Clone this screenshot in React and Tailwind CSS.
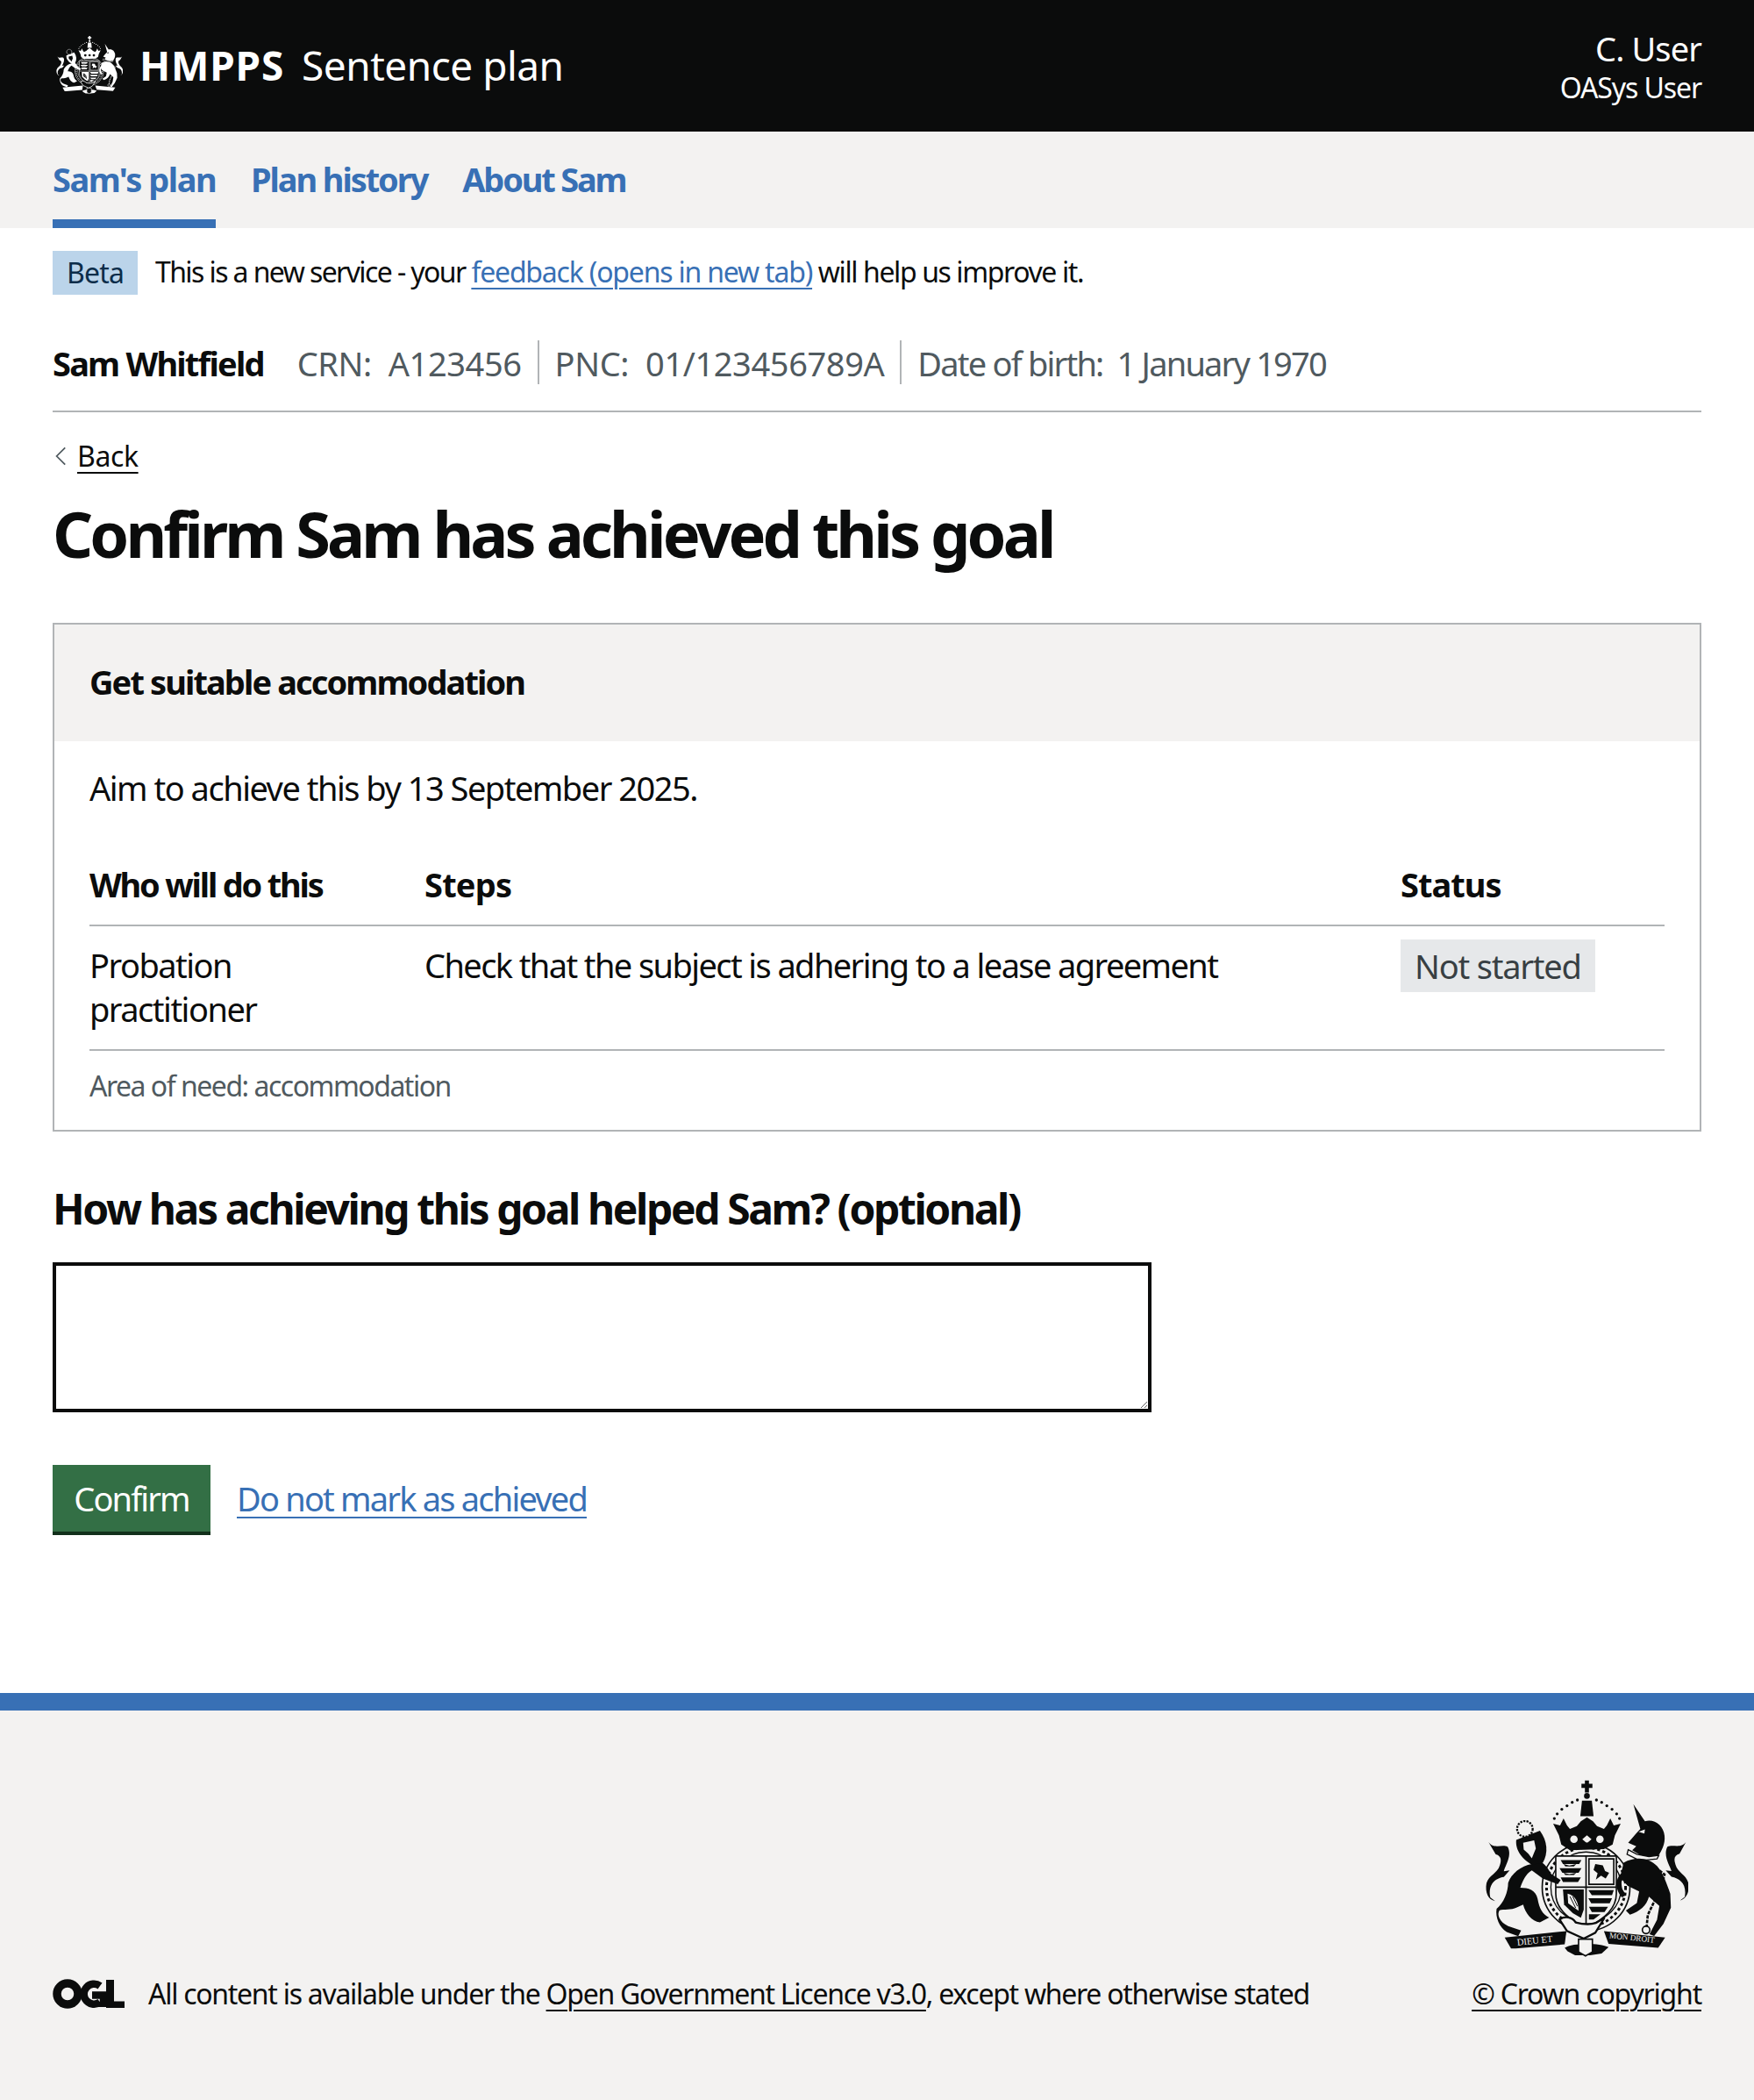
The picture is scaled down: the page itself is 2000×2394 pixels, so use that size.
const Crest = ({ className, cut, legend }) => (
  <svg viewBox="100 55 703 620" className={className} fill="currentColor" aria-hidden="true">
    {/* orb and cross */}
    <path d="M446 60h14v12h12v14h-12v16h-14V86h-12V72h12z" />
    <circle cx="453" cy="114" r="10" />
    <path d="M436 130h34l6 54h-46z" />
    {[[340, 192], [350, 176], [366, 160], [384, 148], [402, 136], [420, 128], [486, 128], [504, 136], [522, 148], [540, 160], [556, 176], [566, 192]].map(([x, y]) => (
      <circle key={x} cx={x} cy={y} r="5" />
    ))}
    {/* crown */}
    <path d="M336 210l24 6 12-24 12 24 10 12 24-10 14-16 21-14 21 14 14 16 24 10 10-12 12-24 12 24 24-6-20 40-8 32-30 16-118 4-30-20-8-32z" />
    <circle cx="408" cy="264" r="13" className={cut} />
    <path d="M453 250l16 14-16 14-16-14z" className={cut} />
    <circle cx="498" cy="264" r="13" className={cut} />
    {/* garter ring */}
    <circle cx="450" cy="430" r="152" fill="none" stroke="currentColor" strokeWidth="5" />
    <circle cx="450" cy="430" r="122" fill="none" stroke="currentColor" strokeWidth="4" />
    <circle cx="450" cy="430" r="137" fill="none" stroke="currentColor" strokeWidth="9" strokeDasharray="10 9" />
    {/* shield */}
    <path d="M345 322h210v130c0 58-52 94-105 118-53-24-105-60-105-118z" className={cut} stroke="currentColor" strokeWidth="5" />
    <path d="M450 322v248M345 430h210" stroke="currentColor" strokeWidth="5" fill="none" />
    {/* quarter 1: three lions */}
    <path d="M362 336h72l-8 14h-56zM358 364h76l-10 16h-56zM362 396h70l-10 16h-52z" />
    <path d="M372 350l20 5 24-5-8 8h-30zM372 380l20 5 24-5-8 8h-30z" />
    {/* quarter 2: lion in a frame */}
    <path d="M460 332h86v88h-86z" fill="none" stroke="currentColor" strokeWidth="5" />
    <path d="M482 350l26 4 8 20 14 6-12 20-16-10-18 14 6-22-14-12z" />
    {/* quarter 3: harp */}
    <path d="M370 438h72v70l-10 28-28-16-30-30z" />
    <path d="M386 452c26 6 38 28 38 60l-36-26z" className={cut} />
    <path d="M394 462l20 40M404 462l16 34" stroke="currentColor" strokeWidth="3" />
    {/* quarter 4: three lions */}
    <path d="M458 440h88l-6 18h-70zM458 468h82l-8 18h-64zM460 498h66l-12 18h-44zM460 524h40l-24 18h-16z" />
    {/* lion */}
    <path d="M262 345c28-15 48 5 68 40l32 20-10 15-52-20-38-28c-22 13-32 38-40 60 28 0 54 8 60 38 6 35 18 55 40 65l-32 17c-28-4-50-32-58-62l-22 10c-20 10-45 5-60 10-10 15 0 40 30 55l45 15-10 20-40-15c-25-15-40-50-35-80 25-20 40-60 40-90 10-30 45-60 82-65z" />
    <path d="M208 266l82-32c26 36 30 76 10 112l-38 6c-28-16-58-46-54-86z" />
    <path d="M232 276l38-8 6 28-14 34-12-16-16-14z" className={cut} />
    <circle cx="238" cy="228" r="27" className={cut} stroke="currentColor" strokeWidth="7" strokeDasharray="7 4" />
    <path d="M112 274c18 26 48 6 66 16 17 30-8 65-13 85l20-3-20 23c-30 5-55 25-47 70l17 13c-24-4-36-30-30-62 8-28 38-34 46-62 8-22 2-34-14-38l-25-42z" />
    {/* unicorn */}
    <path d="M614 142l40 60c32-10 64 14 68 50 3 28-10 52-22 70l-40 10-50-30 14-14-28-12 26-30 16-18z" />
    <path d="M632 238l22-8-2 14z" className={cut} />
    <path d="M596 300l30 16 42 8 34-4-6 12-60 6-44-22z" className={cut} stroke="currentColor" strokeWidth="4" />
    <path d="M580 345c44-24 90-16 116 12 22 26 34 62 46 96l2 48-26 56-32 42-16-6 26-50 8-48-36-32c-8 30-32 52-66 62l-14-14 38-26 8-40-40-20-18-20c-10 14-2 34 14 52l-16 8c-22-24-26-60-2-84z" />
    <path d="M796 274c-18 24-46 6-64 16-16 30 8 64 14 84l-20-2 20 22c30 6 54 26 46 70l-16 12c22-6 34-30 28-62-8-28-36-34-44-62-8-22-2-34 14-38z" />
    {/* chain */}
    <path d="M704 372l18 14-10 40-24 50-24 50-4 40" fill="none" stroke="currentColor" strokeWidth="8" strokeDasharray="12 4" />
    <circle cx="658" cy="578" r="13" fill="none" stroke="currentColor" strokeWidth="5" />
    {/* motto scroll */}
    <path d="M168 604l214-22-6 46-170 14-16 0z" />
    <path d="M512 582l212 22-24 36-172-14z" />
    {legend && (
      <>
        <text x="212" y="632" fontSize="32" transform="rotate(-6 212 632)" className={cut} fontFamily="Liberation Serif, serif">DIEU ET</text>
        <text x="530" y="606" fontSize="28" transform="rotate(6 530 606)" className={cut} fontFamily="Liberation Serif, serif">MON DROIT</text>
      </>
    )}
    <path d="M358 542c20-14 44-8 56 10 30 8 50 8 70 2l30-18-32 52-40 20-58-26z" className={cut} stroke="currentColor" strokeWidth="7" />
    <path d="M376 640c28-18 120-18 152-2l-24 22-40 6h-52l-26-14z" />
    <path d="M424 610h48v44l-24 14-24-14z" className={cut} stroke="currentColor" strokeWidth="5" />
  </svg>
);

const OglLogo = ({ className }) => (
  <svg viewBox="0 0 82 34" className={className} aria-hidden="true">
    <circle cx="17" cy="17" r="12" fill="none" stroke="currentColor" strokeWidth="9.5" />
    <path d="M54 8a11.5 11.5 0 1 0 0 18.5M45 18.5h13V32" fill="none" stroke="currentColor" strokeWidth="8.5" />
    <path d="M61 1h9v24.500h12V33H61z" fill="currentColor" />
  </svg>
);

export default function App() {
  return (
    <div className="min-h-[2394px] flex flex-col bg-white text-[#0b0c0c] font-['Noto_Sans','Liberation_Sans',sans-serif]">
      {/* Header */}
      <header className="h-[150px] bg-[#0b0c0c] text-white flex items-center justify-between px-[60px]">
        <div className="flex items-center -mt-[2px]">
          <Crest className="w-[76px] h-[70px] text-white ml-[4px]" cut="fill-[#0b0c0c]" />
          <span className="ml-[19px] text-[46px] font-bold tracking-[0.8px]">HMPPS</span>
          <span className="ml-[20px] text-[46px] tracking-[-0.5px]">Sentence plan</span>
        </div>
        <div className="text-right">
          <div className="text-[38px] leading-[50px] tracking-[-0.9px]">C. User</div>
          <div className="text-[32px] leading-[40px] tracking-[-1.1px]">OASys User</div>
        </div>
      </header>

      {/* Nav */}
      <nav className="h-[110px] bg-[#f3f2f1] px-[60px] flex gap-[40px] text-[38px] font-bold text-[#3870b5]">
        <a className="h-full pt-[29px] leading-[50px] border-b-[10px] border-[#3870b5] tracking-[-1.5px]">Sam's plan</a>
        <a className="h-full pt-[29px] leading-[50px] tracking-[-2.1px]">Plan history</a>
        <a className="h-full pt-[29px] leading-[50px] tracking-[-2.2px]">About Sam</a>
      </nav>

      <main className="px-[60px] flex-1">
        {/* Phase banner */}
        <div className="mt-[26px] flex items-center text-[32px] leading-[50px] tracking-[-1.6px]">
          <span className="bg-[#bbd4ea] text-[#0c2d4a] px-[16px] h-[50px] w-[97px] tracking-[-0.8px]">Beta</span>
          <span className="ml-[20px] -mt-[3px]">
            This is a new service - your{" "}
            <a className="text-[#3870b5] underline underline-offset-[6px] decoration-2 tracking-[-1.2px]">feedback (opens in new tab)</a>{" "}
            <span className="tracking-[-1.4px]">will help us improve it.</span>
          </span>
        </div>

        {/* Person details */}
        <div className="mt-[52px] h-[82px] border-b-2 border-[#b1b4b6] flex items-start text-[38px] text-[#505a5f] tracking-[-0.4px]">
          <span className="h-[50px] leading-[52px] font-bold text-[#0b0c0c] mr-[38px] tracking-[-1.8px]">Sam Whitfield</span>
          <span className="h-[50px] leading-[52px] pr-[18px] border-r-2 border-[#b1b4b6]">CRN:&nbsp; A123456</span>
          <span className="h-[50px] leading-[52px] px-[18px] border-r-2 border-[#b1b4b6]">PNC:&nbsp; 01/123456789A</span>
          <span className="h-[50px] leading-[52px] pl-[18px] tracking-[-1.8px]">Date of birth:&nbsp; 1 January 1970</span>
        </div>

        {/* Back */}
        <a className="mt-[30px] flex items-center w-fit text-[32px] leading-[40px] tracking-[-0.4px]">
          <svg viewBox="0 0 16 26" className="w-[14px] h-[24px] mr-[12px] ml-[2px] text-[#505a5f]" fill="none" stroke="currentColor" strokeWidth="2">
            <path d="M14 2L3 13l11 11" />
          </svg>
          <span className="underline underline-offset-[6px] decoration-2">Back</span>
        </a>

        <h1 className="mt-[28px] text-[72px] leading-[80px] font-bold tracking-[-3.9px]">Confirm Sam has achieved this goal</h1>

        {/* Goal card */}
        <section className="mt-[62px] border-2 border-[#b1b4b6]">
          <div className="h-[133px] bg-[#f3f2f1] px-[40px] pb-[2px] flex items-center text-[38px] font-bold tracking-[-1.9px]">
            Get suitable accommodation
          </div>
          <div className="px-[40px] pt-[28px] pb-[30px]">
            <p className="text-[38px] leading-[50px] tracking-[-1.5px]">Aim to achieve this by 13 September 2025.</p>
            <table className="mt-[40px] w-full text-[38px] leading-[50px] tracking-[-1.5px] table-fixed">
              <thead>
                <tr className="border-b-2 border-[#b1b4b6] text-left">
                  <th className="w-[382px] pt-[20px] pb-[21px] pr-[40px] font-bold tracking-[-2.2px]">Who will do this</th>
                  <th className="pt-[20px] pb-[21px] pr-[40px] font-bold tracking-[-0.8px]">Steps</th>
                  <th className="w-[301px] pt-[20px] pb-[21px] font-bold tracking-[-1px]">Status</th>
                </tr>
              </thead>
              <tbody>
                <tr className="border-b-2 border-[#b1b4b6] align-top">
                  <td className="pt-[19px] pb-[21px] pr-[40px]">Probation practitioner</td>
                  <td className="pt-[19px] pb-[21px] pr-[40px] tracking-[-1.6px]">Check that the subject is adhering to a lease agreement</td>
                  <td className="pt-[15px] pb-[20px]">
                    <span className="inline-block h-[60px] leading-[60px] px-[16px] bg-[#e6e8ea] text-[#383f43] tracking-[-1.2px]">Not started</span>
                  </td>
                </tr>
              </tbody>
            </table>
            <p className="mt-[20px] text-[32px] leading-[40px] text-[#505a5f] tracking-[-1.5px]">Area of need: accommodation</p>
          </div>
        </section>

        {/* Question */}
        <h2 className="mt-[58px] text-[48px] leading-[60px] font-bold tracking-[-2.4px]">How has achieving this goal helped Sam? (optional)</h2>
        <textarea rows={3} className="mt-[31px] block w-[1253px] h-[171px] border-4 border-[#0b0c0c] bg-white" />

        <div className="mt-[60px] flex items-center">
          <button className="h-[80px] w-[180px] bg-[#336f45] text-white text-[38px] tracking-[-1.9px] border-b-4 border-[#12301b]">Confirm</button>
          <a className="ml-[30px] -mt-[3px] text-[38px] text-[#3870b5] underline underline-offset-[6px] decoration-2 tracking-[-1.8px]">Do not mark as achieved</a>
        </div>
      </main>

      {/* Footer */}
      <footer className="h-[464px] bg-[#f3f2f1] border-t-[20px] border-[#3870b5] px-[60px] flex items-end justify-between pb-[96px]">
        <div className="flex items-center h-[50px]">
          <OglLogo className="w-[82px] h-[34px] text-[#0b0c0c]" />
          <span className="ml-[27px] text-[32px] tracking-[-1.28px]">
            All content is available under the{" "}
            <a className="underline underline-offset-[6px] decoration-2">Open Government Licence v3.0</a>, except where otherwise stated
          </span>
        </div>
        <div className="flex flex-col items-center">
          <Crest className="w-[232px] h-[204px] text-[#0b0c0c]" cut="fill-[#f3f2f1]" legend />
          <a className="mt-[16px] h-[50px] leading-[50px] text-[32px] underline underline-offset-[6px] decoration-2 tracking-[-1.2px]">© Crown copyright</a>
        </div>
      </footer>
    </div>
  );
}
